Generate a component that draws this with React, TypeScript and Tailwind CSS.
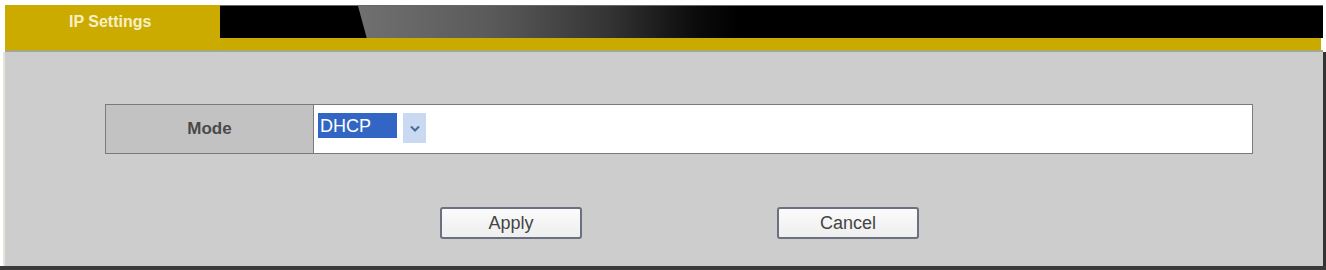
export default function App() {
  return (
    <div className="w-[1326px] h-[270px] bg-white flex flex-col font-['Liberation_Sans',Arial,sans-serif]">
      <div className="h-[5px] shrink-0" />

      {/* Header bar */}
      <div className="flex shrink-0 h-[45px] pl-[5px] pr-[3px]">
        <div className="w-[215px] bg-[#cbab00] flex pt-[9px] pl-[64px]">
          <span className="text-[16px] font-bold leading-none text-[#f6f0c8]">IP Settings</span>
        </div>
        <div className="flex-1 flex flex-col">
          <div className="h-[33px] bg-black border-t border-[#666] relative overflow-hidden">
            <svg className="absolute left-0 top-0" width="560" height="33" viewBox="0 0 560 33">
              <defs>
                <linearGradient id="hdr" x1="0" x2="1" y1="0" y2="0">
                  <stop offset="0" stopColor="#707070" />
                  <stop offset="0.35" stopColor="#5a5a5a" />
                  <stop offset="0.65" stopColor="#353535" />
                  <stop offset="0.88" stopColor="#0c0c0c" />
                  <stop offset="1" stopColor="#000000" />
                </linearGradient>
              </defs>
              <polygon points="138,0 520,0 520,33 147,33" fill="url(#hdr)" />
            </svg>
          </div>
          <div className="h-[12px] bg-[#c9ab00] mr-[2px]" />
        </div>
      </div>
      <div className="h-[2px] shrink-0 bg-[#a3a88c] ml-[5px] mr-[3px]" />

      {/* Body */}
      <div className="flex-1 flex ml-[3px]">
        <div className="flex-1 bg-[#cdcdcd] border-l-2 border-[#e4e4dc] border-r-[3px] border-r-[#333]">
          <div className="pt-[52px] pl-[100px]">
            <div className="w-[1148px] h-[50px] flex border border-[#7a7a7a]">
              <div className="w-[208px] bg-[#c2c2c2] border-r border-[#7a7a7a] flex items-center justify-center">
                <span className="text-[17px] font-bold text-[#4a4a4a]">Mode</span>
              </div>
              <div className="flex-1 bg-white flex items-start pt-[8px] pl-[4px]">
                <div className="flex items-stretch h-[30px]">
                  <div className="w-[79px] h-[25px] bg-[#3366c4] flex items-center pl-[2px]">
                    <span className="text-[18px] leading-none text-white">DHCP</span>
                  </div>
                  <div className="ml-[6px] w-[23px] bg-[#c9d9f2] flex items-center justify-center">
                    <svg width="12" height="9" viewBox="0 0 12 9">
                      <path d="M2 2.5 L6 6.5 L10 2.5" fill="none" stroke="#4a6a9a" strokeWidth="2" />
                    </svg>
                  </div>
                </div>
              </div>
            </div>

            <div className="flex gap-[195px] pt-[53px] pl-[335px]">
              <button className="w-[142px] h-[32px] rounded-[3px] border-2 border-[#6a7080] bg-gradient-to-b from-[#fbfbfb] to-[#eeeeee] text-[18px] text-[#444]">
                Apply
              </button>
              <button className="w-[142px] h-[32px] rounded-[3px] border-2 border-[#6a7080] bg-gradient-to-b from-[#fbfbfb] to-[#eeeeee] text-[18px] text-[#444]">
                Cancel
              </button>
            </div>
          </div>
        </div>
      </div>
      <div className="h-[4px] shrink-0 bg-[#3a3a3a]" />
    </div>
  );
}
